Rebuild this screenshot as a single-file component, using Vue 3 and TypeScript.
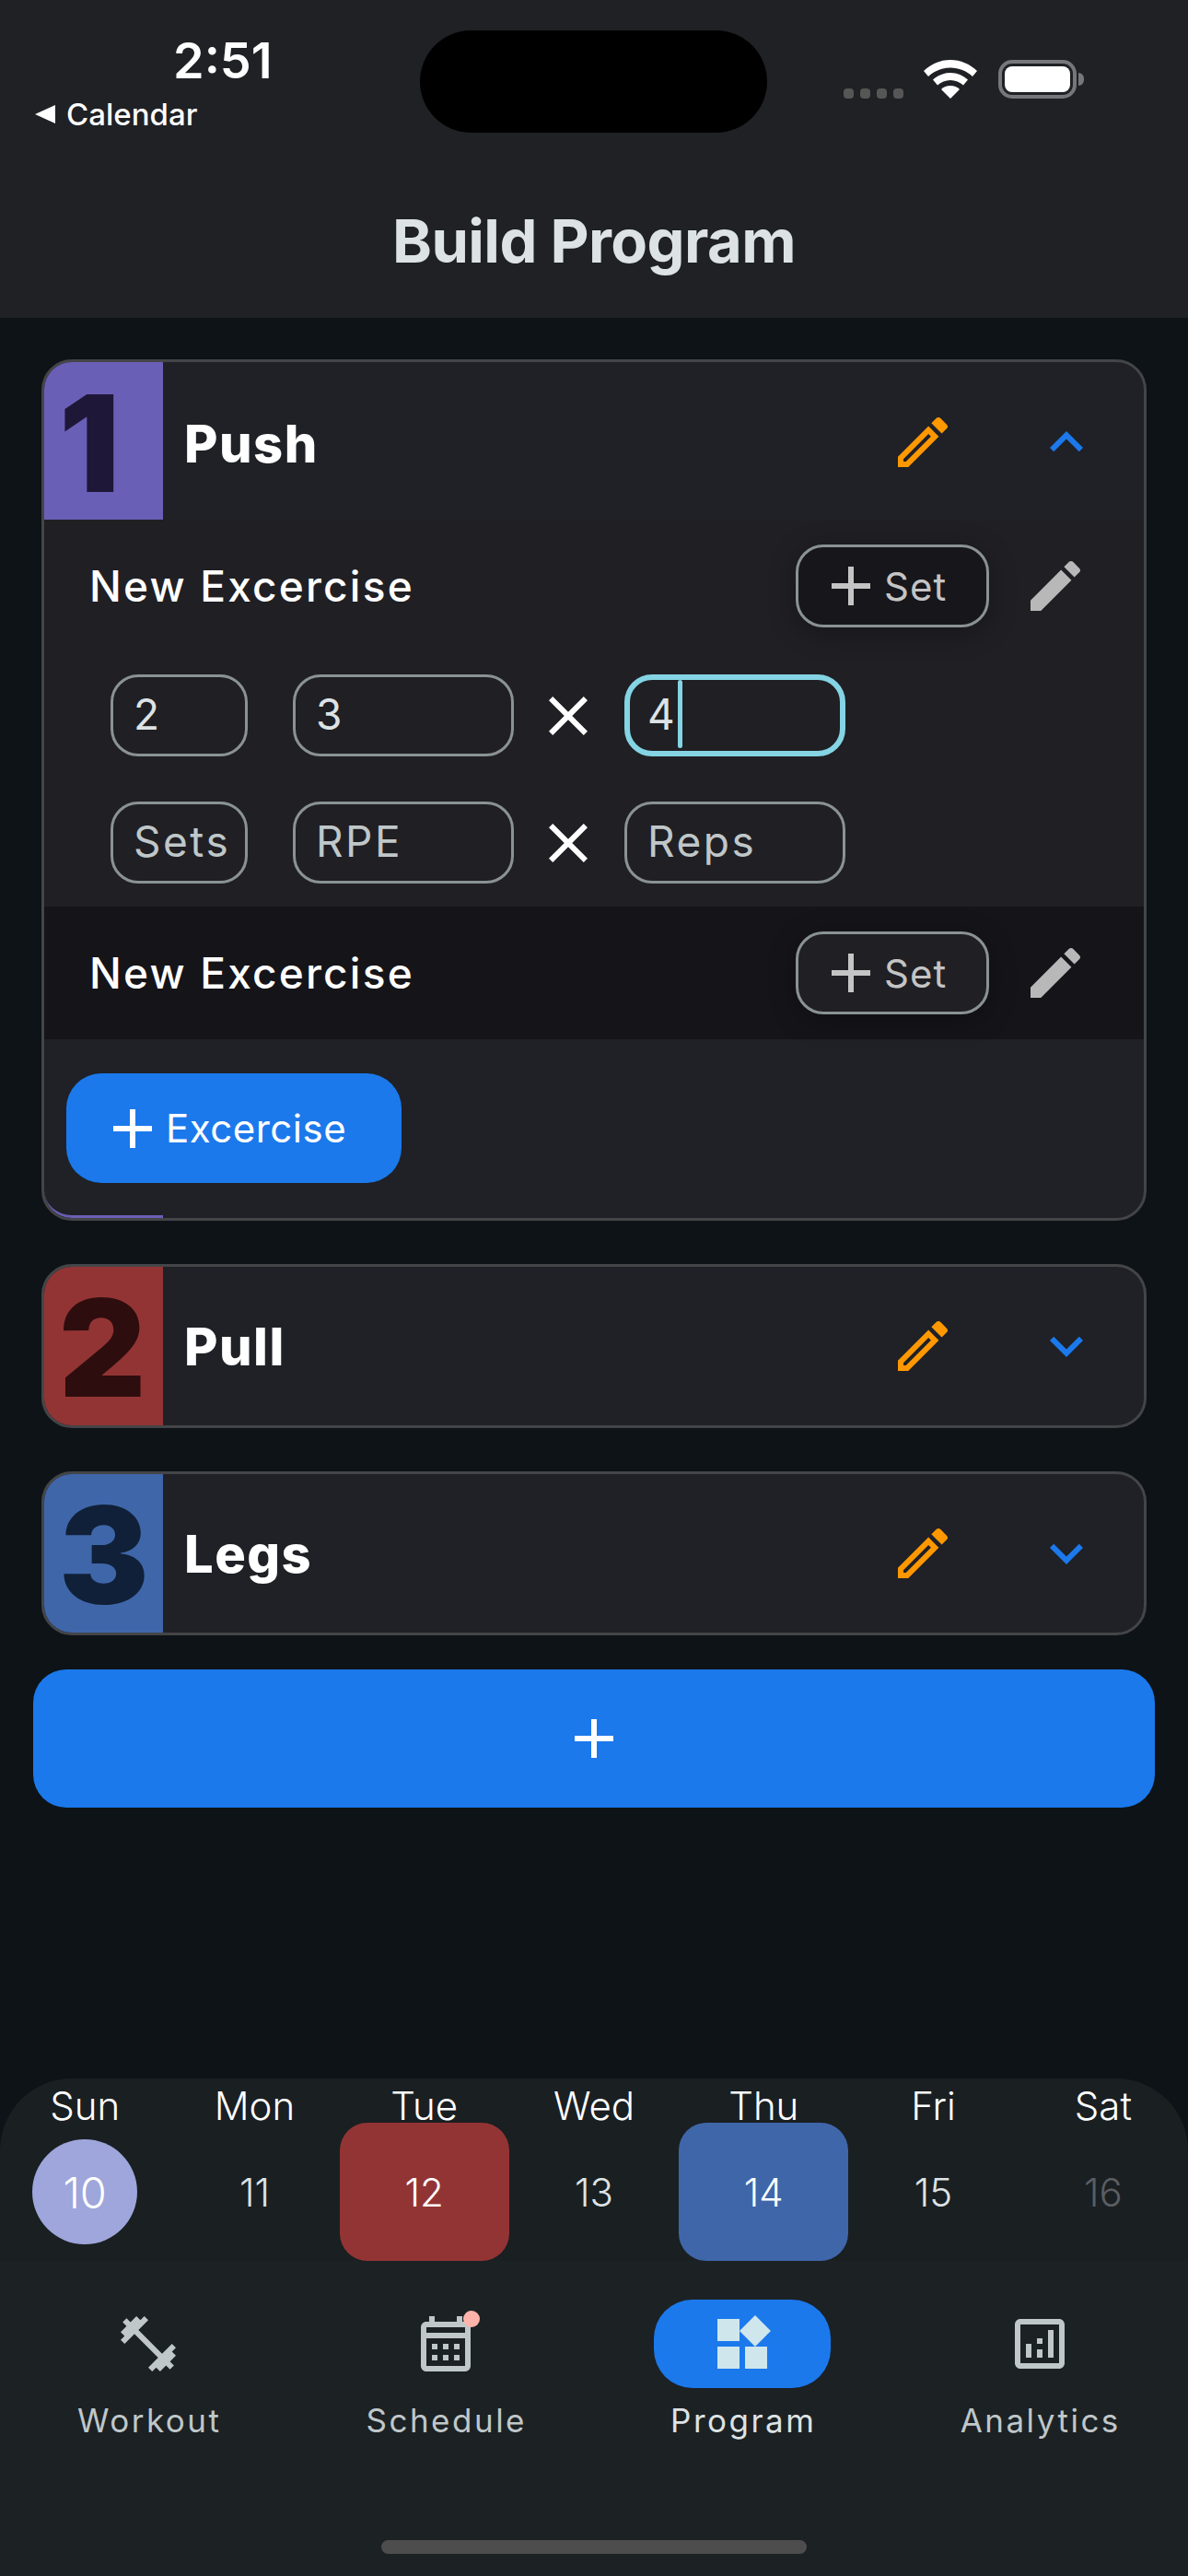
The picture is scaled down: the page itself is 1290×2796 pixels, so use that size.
<script setup lang="ts">
interface Day {
  label: string
  num: number
  kind?: 'today' | 'red' | 'blue' | 'off'
}

interface Block {
  num: number
  name: string
  tone: string
  open?: boolean
}

const days: Day[] = [
  { label: 'Sun', num: 10, kind: 'today' },
  { label: 'Mon', num: 11 },
  { label: 'Tue', num: 12, kind: 'red' },
  { label: 'Wed', num: 13 },
  { label: 'Thu', num: 14, kind: 'blue' },
  { label: 'Fri', num: 15 },
  { label: 'Sat', num: 16, kind: 'off' }
]

const blocks: Block[] = [
  { num: 1, name: 'Push', tone: 'purple', open: true },
  { num: 2, name: 'Pull', tone: 'red' },
  { num: 3, name: 'Legs', tone: 'blue' }
]

const plus = 'M19 13h-6v6h-2v-6H5v-2h6V5h2v6h6v2z'
const close = 'M19 6.41L17.59 5 12 10.59 6.41 5 5 6.41 10.59 12 5 17.59 6.41 19 12 13.41 17.59 19 19 17.59 13.41 12z'
const tip = 'M20.71 7.04c.39-.39.39-1.04 0-1.41l-2.34-2.34c-.37-.39-1.02-.39-1.41 0l-1.84 1.83 3.75 3.75 1.84-1.83z'
const editSolid = 'M3 17.25V21h3.75L17.81 9.94l-3.75-3.75L3 17.25z' + tip
const editLine = 'M3 17.25V21h3.75L17.81 9.94l-3.75-3.75L3 17.25zM5.92 19H5v-.92l9.06-9.06.92.92L5.92 19z' + tip

const tabs = [
  { label: 'Workout', path: 'M20.57 14.86L22 13.43 20.57 12 17 15.57 8.43 7 12 3.43 10.57 2 9.14 3.43 7.71 2 5.57 4.14 4.14 2.71 2.71 4.14l1.43 1.43L2 7.71l1.43 1.43L2 10.57 3.43 12 7 8.43 15.57 17 12 20.57 13.43 22l1.43-1.43L16.29 22l2.14-2.14 1.43 1.43 1.43-1.43-1.43-1.43L22 16.29z' },
  { label: 'Schedule', dot: true, path: 'M19 4h-1V2h-2v2H8V2H6v2H5c-1.11 0-1.99.9-1.99 2L3 20c0 1.1.89 2 2 2h14c1.1 0 2-.9 2-2V6c0-1.1-.9-2-2-2zm0 16H5V10h14v10zm0-12H5V6h14v2zM9 14H7v-2h2v2zm4 0h-2v-2h2v2zm4 0h-2v-2h2v2zm-8 4H7v-2h2v2zm4 0h-2v-2h2v2zm4 0h-2v-2h2v2z' },
  { label: 'Program', active: true, path: 'M13 13v8h8v-8h-8zM3 21h8v-8H3v8zM3 3v8h8V3H3zm13.66-1.31L11 7.34 16.66 13l5.66-5.66-5.66-5.65z' },
  { label: 'Analytics', path: 'M19 3H5c-1.1 0-2 .9-2 2v14c0 1.1.9 2 2 2h14c1.1 0 2-.9 2-2V5c0-1.1-.9-2-2-2zm0 16H5V5h14v14zM7 12h2v5H7zm8-5h2v10h-2zm-4 7h2v3h-2zm0-4h2v2h-2z' }
]
</script>

<template>
  <div class="page">
    <header class="top">
      <div class="status">
        <div class="status-left">
          <div class="time">2:51</div>
          <div class="back">
            <svg class="back-arrow" viewBox="0 0 22 20"><path d="M22 0v20L0 10z" /></svg>
            <span>Calendar</span>
          </div>
        </div>
        <div class="island"></div>
        <div class="status-right">
          <div class="signal"><i></i><i></i><i></i><i></i></div>
          <svg class="wifi" viewBox="0 0 58 42">
            <path d="M29 0c11 0 21 4.400 29 12l-5 6c-6.500-6-15-9.500-24-9.500S11.500 12 5 18l-5-6C8 4.400 18 0 29 0z" />
            <path d="M29 14c7.500 0 14 3 19 7.500l-5 6c-3.800-3.400-8.700-5.500-14-5.500s-10.200 2.100-14 5.500l-5-6C15 17 21.500 14 29 14z" />
            <path d="M29 28c4 0 7.500 1.500 10 4L29 42 19 32c2.500-2.500 6-4 10-4z" />
          </svg>
          <div class="battery"><div class="battery-fill"></div></div>
          <div class="battery-tip"></div>
        </div>
      </div>
      <h1 class="title">Build Program</h1>
    </header>

    <main class="content">
      <section v-for="block in blocks" :key="block.num" class="card">
        <div class="card-head" :class="{ open: block.open }">
          <div class="badge" :class="block.tone">{{ block.num }}</div>
          <div class="card-name">{{ block.name }}</div>
          <svg class="icon pencil-orange" viewBox="0 0 24 24"><path fill-rule="evenodd" :d="editLine" /></svg>
          <svg class="icon chevron" viewBox="0 0 24 24">
            <path v-if="block.open" d="M12 8l-6 6 1.410 1.410L12 10.830l4.590 4.580L18 14z" />
            <path v-else d="M16.590 8.590L12 13.170 7.410 8.590 6 10l6 6 6-6z" />
          </svg>
        </div>

        <template v-if="block.open">
          <div class="exercise">
            <div class="exercise-head">
              <div class="exercise-name">New Excercise</div>
              <button class="set-btn">
                <svg class="icon" viewBox="0 0 24 24"><path :d="plus" /></svg>
                <span>Set</span>
              </button>
              <svg class="icon pencil-gray" viewBox="0 0 24 24"><path :d="editSolid" /></svg>
            </div>
            <div class="set-row">
              <div class="field small">2</div>
              <div class="field wide">3</div>
              <svg class="icon times" viewBox="0 0 24 24"><path :d="close" /></svg>
              <div class="field wide focused">4<span class="caret"></span></div>
            </div>
            <div class="set-row second">
              <div class="field small hint">Sets</div>
              <div class="field wide hint">RPE</div>
              <svg class="icon times" viewBox="0 0 24 24"><path :d="close" /></svg>
              <div class="field wide hint">Reps</div>
            </div>
          </div>
          <div class="exercise-closed">
            <div class="exercise-name">New Excercise</div>
            <button class="set-btn">
              <svg class="icon" viewBox="0 0 24 24"><path :d="plus" /></svg>
              <span>Set</span>
            </button>
            <svg class="icon pencil-gray" viewBox="0 0 24 24"><path :d="editSolid" /></svg>
          </div>
          <button class="add-exercise">
            <svg class="icon" viewBox="0 0 24 24"><path :d="plus" /></svg>
            <span>Excercise</span>
          </button>
          <div class="edge"></div>
        </template>
      </section>

      <button class="add-day">
        <svg class="icon" viewBox="0 0 24 24"><path :d="plus" /></svg>
      </button>
    </main>

    <section class="week">
      <div v-for="day in days" :key="day.label" class="day">
        <div class="day-label">{{ day.label }}</div>
        <div class="day-cell" :class="day.kind">
          <span class="day-num">{{ day.num }}</span>
        </div>
      </div>
    </section>

    <nav class="tabs">
      <div v-for="tab in tabs" :key="tab.label" class="tab" :class="{ active: tab.active }">
        <div class="tab-icon">
          <svg class="icon" viewBox="0 0 24 24"><path :d="tab.path" /></svg>
          <span v-if="tab.dot" class="dot"></span>
        </div>
        <div class="tab-label">{{ tab.label }}</div>
      </div>
      <div class="home-bar"></div>
    </nav>
  </div>
</template>

<style>
html,
body {
  margin: 0;
  background: #0d1317;
}
</style>

<style scoped>
.page {
  width: 1290px;
  height: 2796px;
  display: flex;
  flex-direction: column;
  overflow: hidden;
  background: #0d1317;
  font-family: Inter, "Liberation Sans", sans-serif;
  color: #fff;
}

.icon {
  width: 72px;
  height: 72px;
  flex: none;
  display: block;
  fill: currentColor;
}

.top {
  height: 345px;
  flex: none;
  background: #1f2125;
}

.status {
  height: 144px;
  padding-top: 33px;
  display: flex;
}

.status-left {
  width: 456px;
  flex: none;
}

.time {
  margin: 3px 0 0 188px;
  height: 60px;
  font-size: 54px;
  line-height: 60px;
  font-weight: 600;
}

.back {
  margin: 8px 0 0 38px;
  display: flex;
  align-items: center;
  gap: 12px;
  height: 40px;
  font-size: 33px;
  font-weight: 500;
}

.back-arrow {
  width: 22px;
  height: 20px;
  fill: #fff;
}

.island {
  width: 377px;
  height: 111px;
  flex: none;
  background: #000;
  border-radius: 56px;
}

.status-right {
  margin-left: 83px;
  height: 74px;
  display: flex;
  align-items: flex-end;
}

.signal {
  display: flex;
  gap: 7px;
}

.signal i {
  display: block;
  width: 11px;
  height: 11px;
  border-radius: 4px;
  background: #565656;
}

.wifi {
  width: 58px;
  height: 42px;
  margin-left: 22px;
  fill: #fff;
}

.battery {
  width: 85px;
  height: 42px;
  box-sizing: border-box;
  margin-left: 23px;
  padding: 3px;
  border: 4px solid #77777b;
  border-radius: 15px;
}

.battery-fill {
  height: 100%;
  background: #fff;
  border-radius: 8px;
}

.battery-tip {
  width: 6px;
  height: 14px;
  margin: 0 0 14px 2px;
  background: #77777b;
  border-radius: 0 6px 6px 0;
}

.title {
  margin: 53px 0 0;
  text-align: center;
  font-size: 65px;
  line-height: 64px;
  font-weight: 700;
  letter-spacing: -0.6px;
  color: #dde3e5;
}

.content {
  padding: 45px 36px 0;
  display: flex;
  flex-direction: column;
  flex: 1;
}

.card {
  position: relative;
  margin: 0 9px 47px;
  border: 3px solid #444548;
  border-radius: 33px;
  overflow: hidden;
  background: #1f2126;
}

.card-head {
  height: 172px;
  display: flex;
  align-items: center;
}

.card-head.open {
  height: 171px;
}

.card-head.open .icon {
  margin-top: 3px;
}

.badge {
  width: 129px;
  height: 100%;
  box-sizing: border-box;
  padding: 4px 0 0 16px;
  flex: none;
  display: flex;
  align-items: center;
  font-size: 146px;
  font-weight: 900;
}

.badge.purple {
  background: #6a5fb6;
  color: #1e1738;
}

.badge.red {
  background: #933434;
  color: #2e0d0e;
}

.badge.blue {
  background: #3f66a9;
  color: #102038;
}

.card-name {
  flex: 1;
  margin-left: 23px;
  padding-top: 2px;
  font-size: 56px;
  font-weight: 800;
  letter-spacing: 1.500px;
}

.card-head.open .card-name {
  padding-top: 6px;
}

.pencil-orange {
  color: #ff9800;
}

.chevron {
  margin-left: 84px;
  margin-right: 48px;
  color: #1b79ec;
}

.exercise {
  background: #201f24;
  padding: 27px 0 25px;
}

.exercise-head,
.exercise-closed {
  display: flex;
  align-items: center;
  padding-left: 49px;
}

.exercise-closed {
  height: 144px;
  background: #151419;
}

.exercise-name {
  flex: 1;
  font-size: 46px;
  font-weight: 500;
  letter-spacing: 2.200px;
}

.set-btn {
  width: 210px;
  height: 90px;
  box-sizing: border-box;
  display: flex;
  align-items: center;
  padding: 0 0 0 21px;
  border: 3px solid #8a9294;
  border-radius: 30px;
  background: #17161b;
  color: #c4c4c4;
  font: inherit;
  font-size: 42px;
  letter-spacing: 1px;
  box-shadow: 0 6px 30px rgba(0, 0, 0, 0.3);
}

.exercise-closed .set-btn {
  background: #201f24;
}

.pencil-gray {
  margin: 0 60px 0 36px;
  color: #b8b8b8;
}

.set-row {
  margin: 51px 0 0 72px;
  display: flex;
  align-items: center;
}

.set-row.second {
  margin-top: 49px;
}

.field {
  position: relative;
  height: 89px;
  box-sizing: border-box;
  padding: 0 0 3px 22px;
  display: flex;
  align-items: center;
  border: 3px solid #8a9294;
  border-radius: 30px;
  font-size: 46px;
  letter-spacing: 2.500px;
  color: #dde3e5;
}

.field.hint {
  color: #bfc7c9;
}

.field.small {
  width: 149px;
  margin-right: 49px;
}

.field.wide {
  width: 240px;
}

.field.focused {
  border: 6px solid #84d4e4;
  padding-left: 19px;
}

.caret {
  position: absolute;
  left: 52px;
  top: 0;
  bottom: 3px;
  width: 5px;
  border-radius: 3px;
  background: #84d4e4;
}

.times {
  margin: 0 25px 0 23px;
  color: #fff;
}

.add-exercise {
  width: 364px;
  height: 119px;
  margin: 37px 0 38px 24px;
  display: flex;
  align-items: center;
  padding: 0 0 0 36px;
  border: 0;
  border-radius: 38px;
  background: #1b79ec;
  color: #fff;
  font: inherit;
  font-size: 42px;
  letter-spacing: 0.5px;
}

.edge {
  position: absolute;
  left: 0;
  bottom: 0;
  width: 129px;
  height: 33px;
  box-sizing: border-box;
  border-bottom: 3px solid #6a5fb6;
  border-bottom-left-radius: 30px;
}

.add-day {
  height: 150px;
  margin-top: -10px;
  flex: none;
  display: flex;
  align-items: center;
  justify-content: center;
  border: 0;
  border-radius: 36px;
  background: #1b79ec;
  color: #fff;
}

.week {
  height: 198px;
  flex: none;
  display: grid;
  grid-template-columns: repeat(7, 1fr);
  background: #1a1f22;
  border-radius: 78px 78px 0 0;
}

.day {
  display: flex;
  flex-direction: column;
  align-items: stretch;
}

.day-label {
  height: 48px;
  line-height: 60px;
  text-align: center;
  font-size: 42px;
  font-weight: 300;
}

.day-cell {
  height: 150px;
  display: flex;
  align-items: center;
  justify-content: center;
  border-radius: 30px;
  color: #dde3e5;
}

.day-num {
  font-size: 42px;
  font-weight: 300;
}

.day-cell.red {
  background: #933434;
  color: #fff;
}

.day-cell.blue {
  background: #3f66a9;
  color: #fff;
}

.day-cell.off {
  color: #5a5e60;
}

.day-cell.today {
  color: #fff;
}

.day-cell.today .day-num {
  width: 114px;
  height: 114px;
  display: flex;
  align-items: center;
  justify-content: center;
  border-radius: 50%;
  background: #9ea6db;
  font-size: 47px;
}

.tabs {
  position: relative;
  height: 342px;
  flex: none;
  display: grid;
  grid-template-columns: repeat(4, 1fr);
  align-items: start;
  background: #1c2124;
}

.tab {
  padding-top: 42px;
  display: flex;
  flex-direction: column;
  align-items: center;
  color: #bfc7c9;
}

.tab-icon {
  position: relative;
  width: 192px;
  height: 96px;
  display: flex;
  align-items: center;
  justify-content: center;
  border-radius: 42px;
}

.tab.active .tab-icon {
  background: #1b79ec;
  color: #cfe6ec;
}

.tab.active .tab-label {
  color: #dde3e5;
}

.tab-label {
  margin-top: 13px;
  padding-left: 2px;
  font-size: 35px;
  line-height: 44px;
  letter-spacing: 2.500px;
}

.dot {
  position: absolute;
  left: 115px;
  top: 12px;
  width: 18px;
  height: 18px;
  border-radius: 50%;
  background: #ffb4ab;
}

.home-bar {
  position: absolute;
  left: 414px;
  top: 303px;
  width: 462px;
  height: 15px;
  border-radius: 8px;
  background: #4d4d4d;
}
</style>
